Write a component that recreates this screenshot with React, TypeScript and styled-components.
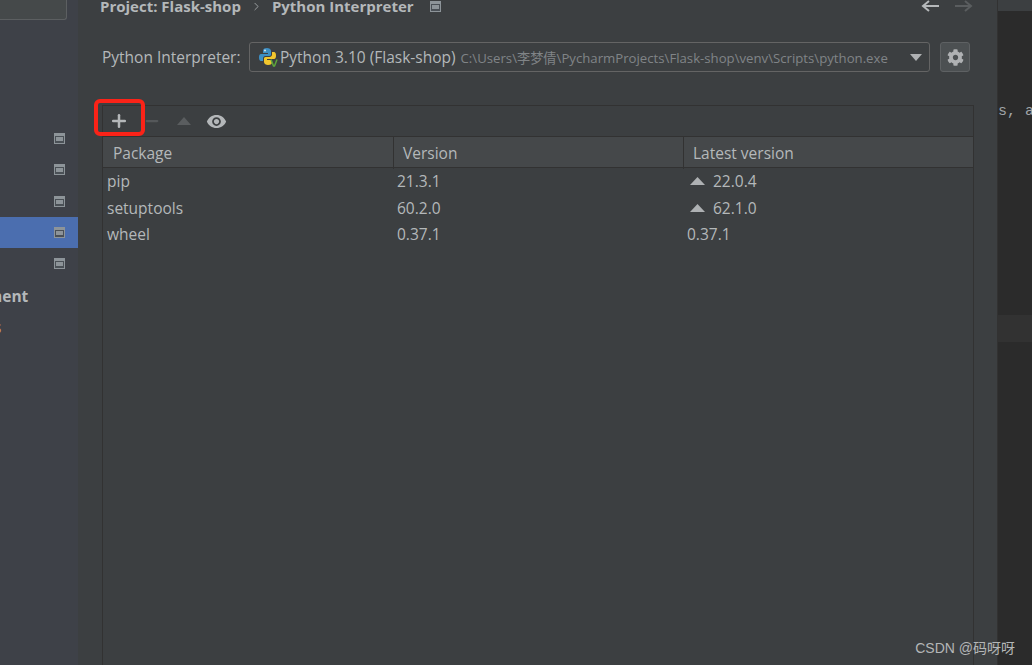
import styled, { createGlobalStyle } from "styled-components";
import { ChevronRight, Minus, Plus } from "lucide-react";
import { FaCog } from "react-icons/fa";
import { MdVisibility } from "react-icons/md";

type T_PackageRow = {
  name: string;
  version: string;
  latest: string;
  upgrade: boolean;
};

const PACKAGES: T_PackageRow[] = [
  { name: "pip", version: "21.3.1", latest: "22.0.4", upgrade: true },
  { name: "setuptools", version: "60.2.0", latest: "62.1.0", upgrade: true },
  { name: "wheel", version: "0.37.1", latest: "0.37.1", upgrade: false },
];

const SIDE_ROWS = [false, false, false, true, false];

function WindowIcon() {
  return (
    <svg width="11" height="11" viewBox="0 0 11 11">
      <rect x="0" y="0" width="11" height="11" fill="#8d9499" />
      <rect x="1" y="3" width="9" height="7" fill="#4a5056" />
      <rect x="2" y="4" width="7" height="4" fill="#8d9499" />
    </svg>
  );
}

function PythonIcon() {
  return (
    <svg width="20" height="20" viewBox="0 0 20 20">
      <path
        d="M9 1C6 1 5 2 5 4v2h5v1H3C1.500 7 1 8.500 1 10.500S1.700 14 3 14h2v-2.500C5 10 6 9 7.500 9h4C12.500 9 13 8.200 13 7.500V4c0-2-2-3-4-3z"
        fill="#3d8fc4"
      />
      <circle cx="7" cy="3.500" r="0.900" fill="#e8f0f5" />
      <path
        d="M10 18c3 0 4-1 4-3v-2H9v-1h7c1.500 0 2-1.500 2-3.500S17.300 5 16 5h-2v2.500C14 9 13 10 11.500 10h-4C6.500 10 6 10.800 6 11.500V15c0 2 2 3 4 3z"
        fill="#f2c72e"
      />
      <path d="M13 12.500l2.500 6.500h1l2.500-6.500" fill="none" stroke="#5da63c" strokeWidth="1.500" />
    </svg>
  );
}

function UpTriangle() {
  return (
    <svg width="15" height="8" viewBox="0 0 15 8">
      <path d="M7.500 0L15 8H0z" fill="#aeb1b3" />
    </svg>
  );
}

function NavArrow({ color, flip }: { color: string; flip: boolean }) {
  return (
    <svg width="18" height="12" viewBox="0 0 18 12" style={flip ? { transform: "scaleX(-1)" } : undefined}>
      <path d="M18 6H2M8 1L2 6l6 5" fill="none" stroke={color} strokeWidth="2" />
    </svg>
  );
}

function App() {
  return (
    <>
      <GlobalStyle />
      <Page>
        <Sidebar>
          <SearchBox />
          <SideList>
            {SIDE_ROWS.map((selected, i) => (
              <SideRow key={i} $selected={selected}>
                <WindowIcon />
              </SideRow>
            ))}
          </SideList>
          <SideBold>ment</SideBold>
          <SideOrange>s</SideOrange>
        </Sidebar>

        <Dialog>
          <Breadcrumb>
            <CrumbText>Project: Flask-shop</CrumbText>
            <ChevronRight size={13} color="#b0b3b5" strokeWidth={1.500} />
            <CrumbText>Python Interpreter</CrumbText>
            <CrumbIcon>
              <WindowIcon />
            </CrumbIcon>
            <NavArrows>
              <NavArrow color="#b5b8ba" flip={false} />
              <NavArrow color="#5a5d5f" flip />
            </NavArrows>
          </Breadcrumb>

          <InterpreterRow>
            <InterpreterLabel>Python Interpreter:</InterpreterLabel>
            <InterpreterSelect>
              <PythonIcon />
              <InterpreterName>Python 3.10 (Flask-shop)</InterpreterName>
              <InterpreterPath>
                C:\Users\李梦倩\PycharmProjects\Flask-shop\venv\Scripts\python.exe
              </InterpreterPath>
              <Caret />
            </InterpreterSelect>
            <GearButton>
              <FaCog size={17} color="#afb1b3" />
            </GearButton>
          </InterpreterRow>

          <TableBox>
            <Toolbar>
              <ToolSlot>
                <Plus size={20} color="#b4b7b9" strokeWidth={3} />
              </ToolSlot>
              <ToolSlot>
                <Minus size={18} color="#55585a" strokeWidth={3} />
              </ToolSlot>
              <ToolSlot>
                <DisabledTriangle />
              </ToolSlot>
              <ToolSlot>
                <MdVisibility size={21} color="#b4b7b9" />
              </ToolSlot>
            </Toolbar>

            <HeaderRow>
              <HeaderCell>Package</HeaderCell>
              <HeaderCell>Version</HeaderCell>
              <HeaderCell>Latest version</HeaderCell>
            </HeaderRow>

            {PACKAGES.map((pkg) => (
              <BodyRow key={pkg.name}>
                <BodyCell>{pkg.name}</BodyCell>
                <BodyCell>{pkg.version}</BodyCell>
                <BodyCell>
                  {pkg.upgrade && (
                    <Upgrade>
                      <UpTriangle />
                    </Upgrade>
                  )}
                  {pkg.latest}
                </BodyCell>
              </BodyRow>
            ))}
          </TableBox>

          <RedMark />
        </Dialog>

        <Editor>
          <EditorTabs />
          <EditorText>s, a</EditorText>
          <CaretLine />
        </Editor>

        <Watermark>CSDN @码呀呀</Watermark>
      </Page>
    </>
  );
}

const GlobalStyle = createGlobalStyle`
  html, body {
    margin: 0;
    padding: 0;
    background: #3c3f41;
  }
  * {
    box-sizing: border-box;
  }
`;

const Page = styled.div`
  position: relative;
  width: 1032px;
  height: 665px;
  display: flex;
  overflow: hidden;
  font-family: "Open Sans", "Noto Sans", "Noto Sans CJK SC", sans-serif;
  font-size: 15.500px;
  color: #b4b8ba;
`;

const Sidebar = styled.div`
  width: 78px;
  flex-shrink: 0;
  background: #3e4148;
  display: flex;
  flex-direction: column;
`;

const SearchBox = styled.div`
  width: 68px;
  height: 20px;
  margin-left: -1px;
  border: 1px solid #5c5f61;
  border-top: none;
  border-left: none;
  border-radius: 0 0 3px 0;
  background: #45494a;
`;

const SideList = styled.div`
  margin-top: 103px;
  display: flex;
  flex-direction: column;
`;

const SideRow = styled.div<{ $selected: boolean }>`
  height: 31.250px;
  padding-right: 13px;
  display: flex;
  align-items: center;
  justify-content: flex-end;
  background: ${({ $selected }) => ($selected ? "#4b6eaf" : "transparent")};
`;

const SideBold = styled.div`
  margin-top: 2px;
  height: 31px;
  line-height: 31px;
  margin-left: -13px;
  font-weight: 700;
  white-space: nowrap;
`;

const SideOrange = styled.div`
  height: 31px;
  line-height: 31px;
  margin-left: -6px;
  color: #c69a63;
`;

const Dialog = styled.div`
  position: relative;
  width: 919px;
  flex-shrink: 0;
  background: #3c3f41;
  padding-left: 22px;
  display: flex;
  flex-direction: column;
`;

const Breadcrumb = styled.div`
  height: 20px;
  margin-top: -4px;
  margin-right: 24px;
  display: flex;
  align-items: center;
  gap: 9px;
`;

const CrumbText = styled.span`
  font-size: 15px;
  font-weight: 700;
  white-space: nowrap;
`;

const CrumbIcon = styled.span`
  margin-left: 7px;
  display: flex;
`;

const NavArrows = styled.div`
  margin-left: auto;
  display: flex;
  gap: 16px;
`;

const InterpreterRow = styled.div`
  margin-top: 26px;
  height: 30px;
  display: flex;
  align-items: center;
  padding-left: 2px;
`;

const InterpreterLabel = styled.span`
  width: 147px;
  flex-shrink: 0;
  font-size: 15.500px;
  white-space: nowrap;
`;

const InterpreterSelect = styled.div`
  width: 681px;
  height: 30px;
  display: flex;
  align-items: center;
  padding-left: 8px;
  padding-right: 7px;
  border: 1px solid #646464;
  border-radius: 3px;
`;

const InterpreterName = styled.span`
  margin-left: 2px;
  font-size: 15.500px;
  white-space: nowrap;
`;

const InterpreterPath = styled.span`
  margin-left: 5px;
  font-size: 13.200px;
  color: #808487;
  white-space: nowrap;
`;

const Caret = styled.span`
  margin-left: auto;
  width: 0;
  height: 0;
  border-left: 6px solid transparent;
  border-right: 6px solid transparent;
  border-top: 7px solid #afb1b3;
`;

const GearButton = styled.div`
  width: 30px;
  height: 30px;
  margin-left: 10px;
  display: flex;
  align-items: center;
  justify-content: center;
  border: 1px solid #5e6163;
  border-radius: 3px;
  background: #4c5052;
`;

const TableBox = styled.div`
  margin-top: 33px;
  margin-left: 2px;
  width: 872px;
  height: 600px;
  flex-shrink: 0;
  border: 1px solid #323232;
  border-bottom: none;
`;

const Toolbar = styled.div`
  height: 31px;
  display: flex;
  align-items: center;
  border-bottom: 1px solid #323232;
`;

const ToolSlot = styled.div`
  width: 32.500px;
  height: 20px;
  display: flex;
  align-items: center;
  justify-content: center;
`;

const DisabledTriangle = styled.span`
  width: 0;
  height: 0;
  border-left: 7.500px solid transparent;
  border-right: 7.500px solid transparent;
  border-bottom: 8px solid #5a5d5f;
`;

const HeaderRow = styled.div`
  height: 31px;
  display: grid;
  grid-template-columns: 290px 290px 1fr;
  background: #45484a;
  border-bottom: 1px solid #323232;
`;

const HeaderCell = styled.div`
  padding-left: 9px;
  line-height: 32px;
  border-left: 1px solid #323232;

  &:first-child {
    padding-left: 10px;
    border-left: none;
  }
`;

const BodyRow = styled.div`
  height: 26.500px;
  display: grid;
  grid-template-columns: 290px 290px 1fr;
  align-items: center;
`;

const BodyCell = styled.div`
  padding-left: 4px;
  display: flex;
  align-items: center;
  white-space: nowrap;
`;

const Upgrade = styled.span`
  margin-left: 3px;
  margin-right: 8px;
  display: flex;
`;

const RedMark = styled.div`
  position: absolute;
  left: 16px;
  top: 99px;
  width: 51px;
  height: 37px;
  border: 4px solid #fb2318;
  border-radius: 6px;
`;

const Editor = styled.div`
  position: relative;
  flex: 1;
  background: #2b2b2b;
  border-left: 1px solid #323232;
`;

const EditorTabs = styled.div`
  height: 11px;
  background: #3c3f41;
`;

const EditorText = styled.div`
  margin-top: 91px;
  height: 20px;
  line-height: 20px;
  font-family: "Liberation Mono", monospace;
  font-size: 15px;
  color: #a0a4a8;
  white-space: pre;
`;

const CaretLine = styled.div`
  margin-top: 193px;
  height: 27px;
  background: #323232;
`;

const Watermark = styled.div`
  position: absolute;
  right: 17px;
  bottom: 8px;
  font-family: "Liberation Sans", "Noto Sans CJK SC", sans-serif;
  font-size: 14px;
  color: #b4b6b7;
`;

export default App;
